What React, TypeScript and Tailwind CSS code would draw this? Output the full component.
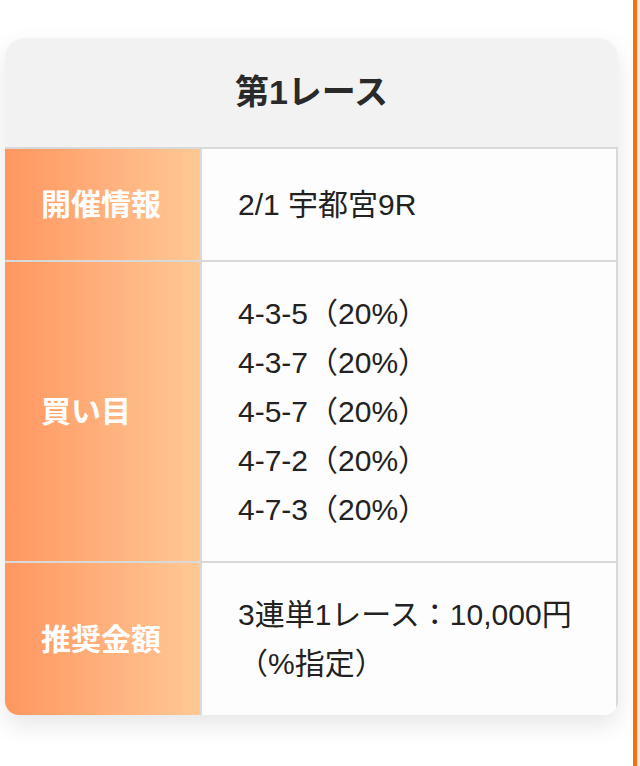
const rows: { label: string; lines: string[] }[] = [
  { label: "開催情報", lines: ["2/1 宇都宮9R"] },
  {
    label: "買い目",
    lines: [
      "4-3-5（20%）",
      "4-3-7（20%）",
      "4-5-7（20%）",
      "4-7-2（20%）",
      "4-7-3（20%）",
    ],
  },
  { label: "推奨金額", lines: ["3連単1レース：10,000円", "（%指定）"] },
];

export default function App() {
  return (
    <div
      className="flex min-h-[766px] w-[640px] bg-white"
      style={{ fontFamily: '"Liberation Sans", "Noto Sans CJK JP", sans-serif' }}
    >
      <div className="flex-1 pl-[5px] pt-[38px]">
        {/* race card */}
        <div className="w-[613px] overflow-hidden rounded-t-[20px] rounded-b-[14px] bg-[#fdfdfd] shadow-[0_10px_24px_rgba(0,0,0,0.10)]">
          <div className="flex h-[109px] items-center justify-center bg-[#f2f2f2]">
            <h2 className="text-[34px] font-bold text-[#2a2a2a]">第1レース</h2>
          </div>

          {rows.map((row) => (
            <div key={row.label} className="flex border-t-2 border-[#d9d9d9]">
              <div className="flex w-[195px] shrink-0 items-center bg-gradient-to-r from-[#ff9660] to-[#ffc895] py-[31px] pl-[36px]">
                <span className="text-[30px] font-bold leading-[49px] text-white">
                  {row.label}
                </span>
              </div>
              <div className="flex flex-1 flex-col justify-center border-l-2 border-r-2 border-[#d9d9d9] bg-[#fdfdfd] py-[27px] pl-[36px]">
                {row.lines.map((line) => (
                  <p key={line} className="text-[30px] leading-[49px] text-[#222]">
                    {line}
                  </p>
                ))}
              </div>
            </div>
          ))}
        </div>
      </div>

      {/* right edge accent */}
      <div className="w-[4px] bg-[#ff6a0a]" />
      <div className="w-[3px] bg-[#fbe9dc]" />
    </div>
  );
}
